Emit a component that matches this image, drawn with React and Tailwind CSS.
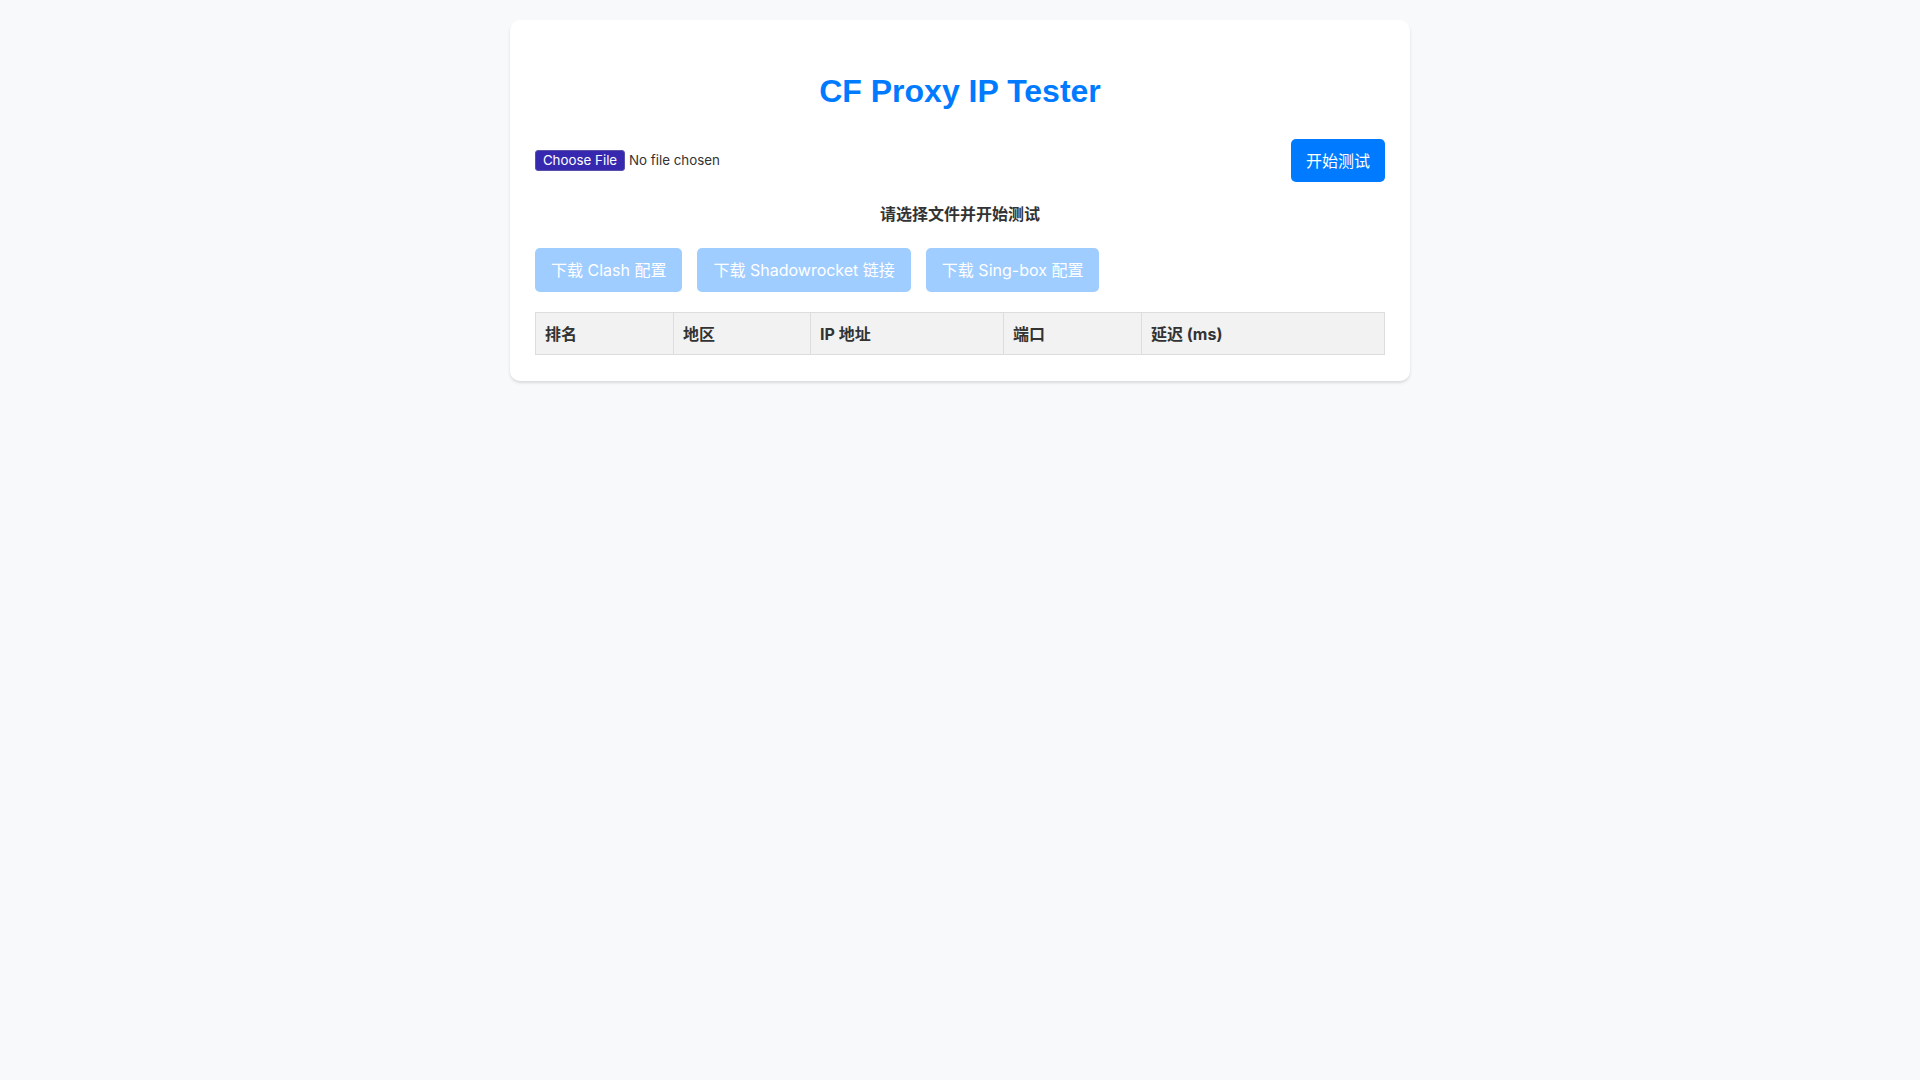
export default function App() {
  const cols = [
    { label: "排名", w: "w-[138px]" },
    { label: "地区", w: "w-[137px]" },
    { label: "IP 地址", w: "w-[193px]" },
    { label: "端口", w: "w-[138px]" },
    { label: "延迟 (ms)", w: "" },
  ];
  return (
    <div className="min-h-screen bg-[#f8f9fa] pt-[20px] font-['Inter','Noto_Sans_CJK_SC',sans-serif] text-[#333]">
      <div className="mx-auto w-[900px] rounded-[10px] bg-white px-[25px] pt-[53px] pb-[26px] shadow-[0_2px_3px_rgba(0,0,0,0.12)]">
        <h1 className="text-center font-['Liberation_Sans','Arial',sans-serif] text-[32px] font-bold leading-[37px] text-[#007bff]">
          CF Proxy IP Tester
        </h1>
        <div className="mt-[29px] flex h-[43px] items-center justify-between">
          <div className="flex items-center">
            <span className="flex h-[21px] w-[90px] items-center justify-center rounded-[3px] border border-[#5a52a8] bg-[#3629b0] text-[13.33px] text-white">
              Choose File
            </span>
            <span className="ml-[4px] text-[13.33px] text-[#333]">No file chosen</span>
          </div>
          <button className="h-[43px] w-[94px] rounded-[5px] bg-[#007bff] text-[16px] text-white">
            开始测试
          </button>
        </div>
        <p className="mt-[21px] text-center text-[16px] font-bold leading-[23px] text-[#333]">
          请选择文件并开始测试
        </p>
        <div className="mt-[22px] flex gap-[15px]">
          {["下载 Clash 配置", "下载 Shadowrocket 链接", "下载 Sing-box 配置"].map((t) => (
            <button
              key={t}
              className="h-[44px] rounded-[5px] bg-[#9fcdff] px-[16px] text-[16px] text-white"
            >
              {t}
            </button>
          ))}
        </div>
        <table className="mt-[20px] w-full border-collapse">
          <thead>
            <tr>
              {cols.map((c) => (
                <th
                  key={c.label}
                  className={`${c.w} h-[42px] border border-[#dddddd] bg-[#f2f2f2] px-[9px] text-left text-[16px] font-bold text-[#333]`}
                >
                  {c.label}
                </th>
              ))}
            </tr>
          </thead>
        </table>
      </div>
    </div>
  );
}
